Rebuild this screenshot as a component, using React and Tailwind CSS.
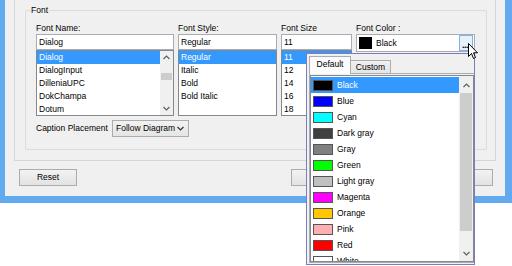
import React from 'react';

const FONT_NAMES = ['Dialog', 'DialogInput', 'DilleniaUPC', 'DokChampa', 'Dotum'];
const FONT_STYLES = ['Regular', 'Italic', 'Bold', 'Bold Italic'];
const FONT_SIZES = ['11', '12', '14', '16', '18'];
const COLORS = [
    ['Black', '#000000'],
    ['Blue', '#0000ff'],
    ['Cyan', '#00ffff'],
    ['Dark gray', '#404040'],
    ['Gray', '#808080'],
    ['Green', '#00ff00'],
    ['Light gray', '#c0c0c0'],
    ['Magenta', '#ff00ff'],
    ['Orange', '#ffc800'],
    ['Pink', '#ffafaf'],
    ['Red', '#ff0000'],
    ['White', '#ffffff'],
];

const Chevron = ({ up = false, className = '' }) => (
    <svg width="7" height="5" viewBox="0 0 7 5" className={className}>
        <path
            d={up ? 'M0.5 4 L3.5 1 L6.5 4' : 'M0.5 1 L3.5 4 L6.5 1'}
            fill="none"
            stroke="#606060"
            strokeWidth="1.2"
        />
    </svg>
);

// plain list with a fixed row height
const ListBox = ({ items, selected, scroll = false }) => (
    <div className="h-[66px] border border-[#828790] bg-white flex overflow-hidden">
        <div className="flex-1 min-w-0">
            {items.map((item, i) => (
                <div
                    key={item}
                    className={`h-[13px] leading-[13px] pl-[2px] whitespace-nowrap ${i === selected ? 'bg-[#3399ff] text-white' : ''}`}
                >
                    {item}
                </div>
            ))}
        </div>
        {scroll && (
            <div className="w-[13px] bg-[#f0f0f0] flex flex-col items-center">
                <div className="h-[13px] flex items-center justify-center"><Chevron up /></div>
                <div className="flex-1 w-full px-[1px] pt-[9px]">
                    <div className="h-[7px] bg-[#cdcdcd]" />
                </div>
                <div className="h-[13px] flex items-center justify-center"><Chevron /></div>
            </div>
        )}
    </div>
);

const Column = ({ label, width, value, children }) => (
    <div className={`flex flex-col ${width}`}>
        <div className="h-[11px] leading-[11px] whitespace-nowrap">{label}</div>
        {value !== undefined && (
            <div className="h-[16px] border border-[#a5acb5] bg-white leading-[14px] pl-[2px]">{value}</div>
        )}
        {children}
    </div>
);

const WinButton = ({ label, className = '' }) => (
    <div className={`h-[17px] border border-[#acacac] bg-gradient-to-b from-[#f2f2f2] to-[#e3e3e3] flex items-center justify-center ${className}`}>
        {label}
    </div>
);

const ColorPopup = () => (
    <div className="absolute left-[306px] top-[53px] w-[169px] h-[212px] border border-[#7c7cc0] bg-[#f0f0f0] flex flex-col pl-[2px] pt-[2px] pb-[1px]">
        {/* tabs */}
        <div className="h-[18px] -mb-px flex items-end">
            <div className="relative z-10 h-[18px] w-[42px] border border-b-0 border-[#acacac] bg-[#fbfbfb] flex items-center justify-center pb-[2px]">
                Default
            </div>
            <div className="h-[14px] w-[40px] border border-l-0 border-[#acacac] bg-gradient-to-b from-[#f0f0f0] to-[#e5e5e5] flex items-center justify-center">
                Custom
            </div>
        </div>
        <div className="flex-1 border border-r-0 border-[#acacac] pt-px flex flex-col min-h-0">
            <div className="flex-1 border border-[#828790] bg-white flex overflow-hidden min-h-0">
                <div className="flex-1 min-w-0 pt-px">
                    {COLORS.map(([name, hex], i) => (
                        <div
                            key={name}
                            className={`h-[16px] flex items-center pl-[2px] gap-[4px] ${i === 0 ? 'bg-[#3399ff] text-white' : ''}`}
                        >
                            <div className="w-[20px] h-[11px] border border-[#555555]" style={{ backgroundColor: hex }} />
                            <span className="whitespace-nowrap">{name}</span>
                        </div>
                    ))}
                </div>
                <div className="w-[14px] bg-[#f0f0f0] flex flex-col pt-px">
                    <div className="h-[16px] flex items-center justify-center"><Chevron up /></div>
                    <div className="flex-1 px-[1px]">
                        <div className="h-[138px] bg-[#cdcdcd]" />
                    </div>
                    <div className="h-[16px] flex items-center justify-center"><Chevron /></div>
                </div>
            </div>
        </div>
    </div>
);

const App = () => {
    return (
        <div className="w-[512px] h-[266px] bg-white overflow-hidden relative font-['Liberation_Sans',Arial,sans-serif] text-[8.5px] text-black">
            {/* dialog window */}
            <div className="h-[203px] bg-[#f0f0f0] border-l-[5px] border-r-[7px] border-b-[7px] border-[#62aaf0] px-[9px] flex flex-col">
                <div className="h-[161px] border-x border-b border-[#d5d5d5] pt-[10px] pb-[10px] pl-[10px] pr-[8px]">
                    {/* Font group box */}
                    <div className="relative h-[140px] border border-[#dcdcdc] rounded-[2px] pt-[12px] pl-[10px]">
                        <span className="absolute left-[4px] -top-[6px] px-[1px] bg-[#f0f0f0] leading-[11px]">Font</span>
                        <div className="flex gap-[4px]">
                            <Column label="Font Name:" width="w-[138px]" value="Dialog">
                                <ListBox items={FONT_NAMES} selected={0} scroll />
                            </Column>
                            <Column label="Font Style:" width="w-[99px]" value="Regular">
                                <ListBox items={FONT_STYLES} selected={0} />
                            </Column>
                            <Column label="Font Size" width="w-[71px]" value="11">
                                <ListBox items={FONT_SIZES} selected={0} />
                            </Column>
                            <Column label="Font Color :" width="w-[119px]">
                                <div className="h-[18px] border border-[#acacac] bg-white flex items-center pl-[2px] pr-px gap-[4px]">
                                    <div className="w-[13px] h-[12px] bg-black shrink-0" />
                                    <span className="flex-1">Black</span>
                                    <div className="w-[14px] h-[16px] shrink-0 border border-[#7eb4ea] bg-[#e5f1fb] flex flex-col justify-end items-start pl-[2px] pb-[1px]">
                                        <span className="text-[9px] leading-[8px] font-bold text-black tracking-[-0.5px]">...</span>
                                    </div>
                                </div>
                            </Column>
                        </div>
                        <div className="mt-[4px] flex items-center gap-[4px]">
                            <span className="w-[72px] whitespace-nowrap">Caption Placement</span>
                            <div className="w-[77px] h-[17px] border border-[#acacac] bg-gradient-to-b from-[#f2f2f2] to-[#e5e5e5] flex items-center pl-[3px] pr-[4px]">
                                <span className="flex-1 whitespace-nowrap">Follow Diagram</span>
                                <svg width="7" height="5" viewBox="0 0 7 5">
                                    <path d="M0.5 1 L3.5 4 L6.5 1" fill="none" stroke="#333" strokeWidth="1.2" />
                                </svg>
                            </div>
                        </div>
                    </div>
                </div>
                {/* bottom buttons */}
                <div className="mt-[8px] flex items-start justify-between pl-[5px] pr-[3px]">
                    <WinButton label="Reset" className="w-[58px]" />
                    <div className="flex gap-[5px]">
                        <WinButton label="OK" className="w-[64px]" />
                        <WinButton label="Cancel" className="w-[64px]" />
                        <WinButton label="Apply" className="w-[64px]" />
                    </div>
                </div>
            </div>

            <ColorPopup />

            {/* mouse pointer */}
            <svg className="absolute left-[468px] top-[43px]" width="12" height="18" viewBox="0 0 12 18">
                <path
                    d="M0.5 0.5 L0.5 13.5 L3.5 10.5 L5.5 15.5 L7.5 14.5 L5.5 9.8 L9.5 9.8 Z"
                    fill="#ffffff"
                    stroke="#000000"
                    strokeWidth="1"
                    strokeLinejoin="round"
                />
            </svg>
        </div>
    );
};

export default App;
